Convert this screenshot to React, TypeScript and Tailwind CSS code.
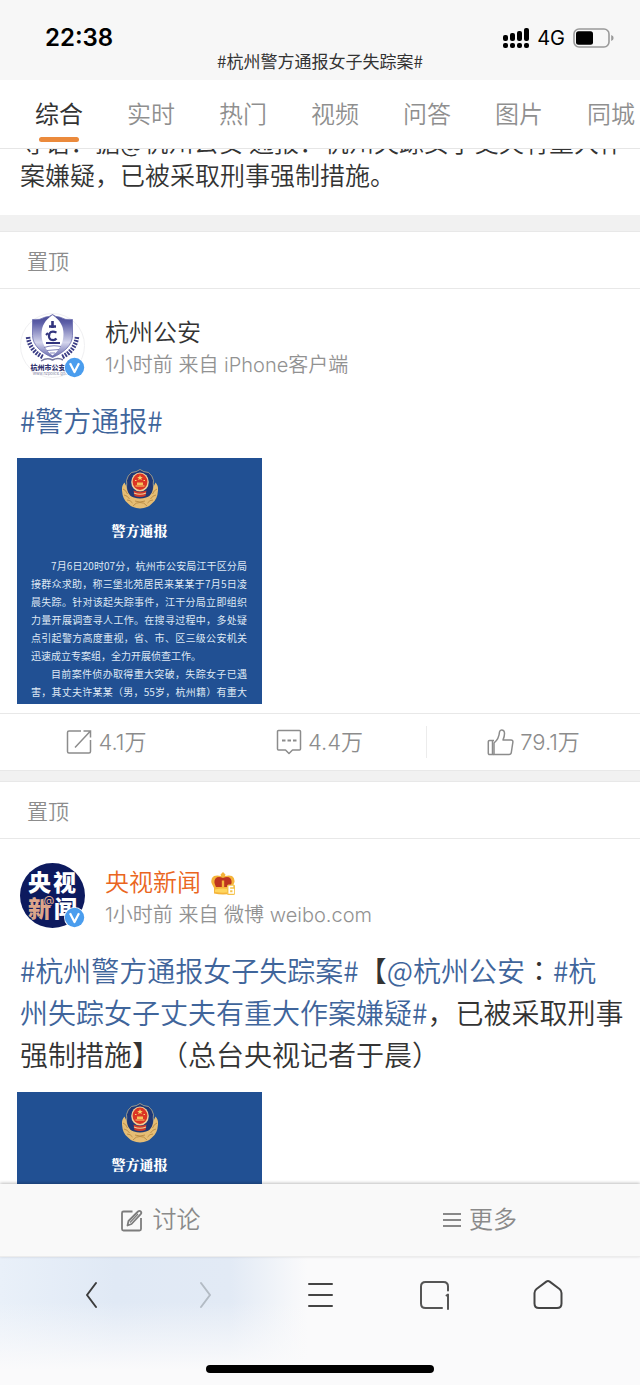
import React from 'react';

const tabs = ['综合', '实时', '热门', '视频', '问答', '图片', '同城'];

const SignalIcon = () => (
  <svg width="27" height="21" viewBox="0 0 27 21" aria-hidden="true">
    <rect x="0" y="7" width="5" height="6" rx="2" />
    <rect x="7" y="5" width="5" height="8" rx="2" />
    <rect x="14" y="3" width="5" height="10" rx="2" />
    <rect x="21" y="0" width="5" height="13" rx="2" />
    <rect x="0" y="15" width="5" height="5" rx="2" />
    <rect x="7" y="15" width="5" height="5" rx="2" />
    <rect x="14" y="15" width="5" height="5" rx="2" />
    <rect x="21" y="15" width="5" height="5" rx="2" />
  </svg>
);

const BatteryIcon = () => (
  <svg width="41" height="20" viewBox="0 0 41 20" aria-hidden="true">
    <rect x="1" y="1" width="35" height="18" rx="5" fill="none" stroke="#9a9a9a" strokeWidth="1.6" />
    <rect x="3" y="3.200" width="17" height="13.600" rx="2.500" />
    <path d="M38.200 7v6c2-.8 2.300-1.800 2.300-3s-.3-2.200-2.300-3z" fill="#9a9a9a" />
  </svg>
);

const VerifiedBadge = () => (
  <svg width="21" height="21" viewBox="0 0 21 21" className="absolute right-0 bottom-0" aria-hidden="true">
    <circle cx="10.500" cy="10.500" r="10.500" fill="#fff" />
    <circle cx="10.500" cy="10.500" r="9.700" fill="#4a9dee" />
    <path d="M6 6.200l4.500 8.800L15 6.200" fill="none" stroke="#fff" strokeWidth="2.200" strokeLinejoin="round" />
  </svg>
);

const PoliceAvatar = () => (
  <svg width="65" height="65" viewBox="0 0 65 65" aria-hidden="true">
    <defs>
      <linearGradient id="shield" x1="0" y1="0" x2="0" y2="1">
        <stop offset="0" stopColor="#43458f" />
        <stop offset="0.2" stopColor="#5d5fa8" />
        <stop offset="0.65" stopColor="#d4d5ec" />
        <stop offset="1" stopColor="#6668ac" />
      </linearGradient>
    </defs>
    <circle cx="32.500" cy="32.500" r="32" fill="#fff" stroke="#f0f0f2" />
    <path d="M12.500 6.500q7 1 13-2.500 4 0 7-2.500 3 2.500 7 2.500 6 3.500 13 2.500v16c0 9-8 17-20 22-12-5-20-13-20-22z" fill="url(#shield)" stroke="#6a6cae" strokeWidth="0.800" />
    <path d="M32.500 2C25 7 21.500 13 21.500 21c0 10 5 17 11 21.500 6-4.500 11-11.500 11-21.500 0-8-3.500-14-11-19z" fill="#fff" />
    <path d="M32.500 8v7M29 13.500h7" stroke="#32347e" strokeWidth="2.600" />
    <path d="M36.500 19.500q-5-2-7 1-1.500 3.500 1 6 4 1.500 6-1" fill="none" stroke="#32347e" strokeWidth="2.200" />
    <path d="M26 30h14M28 20l-2 2" stroke="#32347e" strokeWidth="2" />
    <path d="M24 34.500q8-3 17-1M27 37.500l12-1M30 40h5" fill="none" stroke="#8284bb" strokeWidth="1.100" />
    <path d="M8 24q2 14 15 20M57 24q-2 14-15 20" fill="none" stroke="#3b3d85" strokeWidth="4.500" strokeDasharray="1.800 1.200" />
    <path d="M21 48q6-4 11.500-1 5.500-3 10.500 0" fill="none" stroke="#77799f" strokeWidth="1.500" />
    <text x="28" y="57" textAnchor="middle" fontSize="7" fontWeight="900" fill="#33356f">杭州市公安</text>
    <text x="30" y="62" textAnchor="middle" fontSize="4" fill="#55577f">www.hzpolice.gov</text>
  </svg>
);

const NewsAvatar = () => (
  <svg width="65" height="65" viewBox="0 0 65 65" aria-hidden="true">
    <circle cx="32.500" cy="32.500" r="32.500" fill="#0d1a5e" />
    <text x="8" y="28" fontSize="23" fontWeight="900" fill="#fff">央</text>
    <text x="33" y="28" fontSize="23" fontWeight="900" fill="#fff">视</text>
    <text x="8" y="54" fontSize="23" fontWeight="900" fill="#dda58a">新</text>
    <text x="34" y="54" fontSize="23" fontWeight="900" fill="#fff">闻</text>
    <circle cx="29" cy="37" r="5.500" fill="#0d1a5e" />
    <text x="29" y="40.500" textAnchor="middle" fontSize="11" fontWeight="500" fill="#dda58a">@</text>
  </svg>
);

const CrownIcon = () => (
  <svg width="24" height="23" viewBox="0 0 24 23" aria-hidden="true">
    <path d="M12 0l2.500 2.500-.5 1.500q4-1 7 0 3 2 2.500 6L21 16v5.500q-9 2-18 0V16L.5 11Q-.5 6 3 4q3-1 7 0l-.5-1.500z" fill="#f5b43a" />
    <path d="M12 6q-5-2-7.500.5-2.500 3 .5 8.500h14q3-5.500.5-8.500-2.500-2.500-7.500-.5z" fill="#bd3421" />
    <path d="M10.800 8.500h2.400V15h-2.400z" fill="#f5b43a" />
    <path d="M4 17.500q8-2 16 0v2.500q-8 1.500-16 0z" fill="#ffd65e" />
    <rect x="16" y="12.500" width="8" height="10.500" rx="1.500" fill="#f5c24a" />
    <path d="M22.300 14.500h-4v6.500h4v-3.500h-4" fill="none" stroke="#fff" strokeWidth="1.700" />
  </svg>
);

const PoliceEmblem = () => (
  <svg width="38" height="41" viewBox="0 0 38 41" aria-hidden="true">
    <path d="M19 .5q3.500 2.800 8.500 3 4 3 5 8-.5 3 0 6.500 0 11-6 17h-15q-6-6-6-17 .5-3.500 0-6.500 1-5 5-8 5-.2 8.500-3z" fill="#1f3876" stroke="#cdbb8c" strokeWidth="0.700" />
    <ellipse cx="19" cy="13" rx="8.800" ry="9.600" fill="#f0cf98" />
    <ellipse cx="19" cy="12.800" rx="7.400" ry="8.200" fill="#dc3524" />
    <path d="M19 6l.8 2h2l-1.600 1.200.6 2L19 10l-1.800 1.200.6-2L16.200 8h2z" fill="#f6d36a" />
    <path d="M14 11.500h1.500M22.500 11.500H24M14.500 17h9" stroke="#f6d36a" strokeWidth="1.200" />
    <path d="M16 13.500h6v2.500h-6z" fill="#f6c35a" />
    <path d="M12.500 21.500q6.500 2.500 13 0l-1 5.500q-5.500 2-11 0z" fill="#cf3a2a" />
    <path d="M13 24q6 2.500 12 0" fill="none" stroke="#f0cf98" strokeWidth="1.200" />
    <path d="M3.500 13.500q2 3.500 3 8.500 2 5.500 6.500 6.500 6 2 12 0 4.500-1 6.500-6.500 1-5 3-8.500 3 3 2.500 8-.5 9-6 13-4 4.500-12 5-8-.5-12-5-5.500-4-6-13-.5-5 2.500-8z" fill="#e6bd74" />
    <path d="M2 20q3 1 4.500 5M3 26q3.500.5 5.500 4M6 31q3.500 0 5.500 3M36 20q-3 1-4.500 5M35 26q-3.500.5-5.500 4M32 31q-3.500 0-5.500 3M12 37q3-4 7-3.500 4-.5 7 3.500M14 32q5 2 10 0" fill="none" stroke="#b98a43" strokeWidth="0.900" />
  </svg>
);

const ShareIcon = () => (
  <svg width="26" height="26" viewBox="0 0 26 26" fill="none" stroke="#8c8c8c" strokeWidth="1.500" aria-hidden="true">
    <path d="M15 2H3a1.500 1.500 0 0 0-1.500 1.500v19A1.500 1.500 0 0 0 3 24h20a1.500 1.500 0 0 0 1.500-1.500V11" />
    <path d="M9 18.500L24 2.500M17.500 2h7v6.500" />
  </svg>
);

const CommentIcon = () => (
  <svg width="26" height="26" viewBox="0 0 26 26" fill="none" stroke="#8c8c8c" strokeWidth="1.500" aria-hidden="true">
    <path d="M2.500 1.500h21a1 1 0 0 1 1 1V20a1 1 0 0 1-1 1h-7L13 24.500 9.500 21h-7a1 1 0 0 1-1-1V2.500a1 1 0 0 1 1-1z" strokeLinejoin="round" />
    <path d="M6 11.500h3.500M11.500 11.500H15M17 11.500h3.500" strokeWidth="1.800" />
  </svg>
);

const LikeIcon = () => (
  <svg width="27" height="27" viewBox="0 0 27 27" fill="none" stroke="#8c8c8c" strokeWidth="1.500" strokeLinejoin="round" aria-hidden="true">
    <path d="M7 25.500H2.500a1.200 1.200 0 0 1-1.200-1.200V12.700a1.200 1.200 0 0 1 1.200-1.200H7M5.500 11.500v14" />
    <path d="M7 25.500V14q5-4 5.500-11 .5-2 2-2 3 0 3 3.500 0 3-1.500 6.500h8q2 0 1.900 2l-1.600 10.500q-.3 2-2.300 2z" />
  </svg>
);

const ComposeIcon = () => (
  <svg width="23" height="23" viewBox="0 0 23 23" fill="none" stroke="#7d7d7d" strokeWidth="1.800" aria-hidden="true">
    <path d="M12.500 2.500h-9A1.500 1.500 0 0 0 2 4v16a1.500 1.500 0 0 0 1.500 1.500h16A1.500 1.500 0 0 0 21 20V9" />
    <path d="M7.500 16.500l1-4.500L18 2.500q1.500-1.200 2.700 0t0 2.600L11.500 15z" strokeLinejoin="round" />
    <path d="M10 13.500l8-8.500" strokeWidth="1.200" />
  </svg>
);

const MoreIcon = () => (
  <svg width="18" height="16" viewBox="0 0 18 16" stroke="#888" strokeWidth="1.800" aria-hidden="true">
    <path d="M0 2h18M0 8h18M0 14h18" />
  </svg>
);

const navItems = [
  { label: '后退', color: 'text-[#3c3c3c]', path: 'M21 5l-9 12 9 12' },
  { label: '前进', color: 'text-[#b3bbc4]', path: 'M12 5l9 12-9 12' },
  { label: '菜单', color: 'text-[#444]', path: 'M6 6h23M6 17h23M6 28h23' },
  { label: '窗口', color: 'text-[#555]', path: 'M31 12.500V8.500Q31 4 26.500 4H8.500Q4 4 4 8.500v17Q4 30 8.500 30H25M29.500 17.500l1.500-1V31' },
  { label: '主页', color: 'text-[#444]', path: 'M15.300 3.600Q17 2.500 18.700 3.600L28.500 11q2 1.500 2 4v10.500q0 4.500-4.500 4.500H8q-4.500 0-4.500-4.500V15q0-2.500 2-4z' },
];

const Pinned = () => (
  <h2 className="flex h-[58px] items-center border-y border-[#e8e8e8] px-[27px] pt-1 text-[21px] leading-7 text-[#8c8c8c]">置顶</h2>
);

type HeaderProps = { avatar: React.ReactNode; name: string; nameColor: string; meta: string; badge?: React.ReactNode };

const PostHeader = ({ avatar, name, nameColor, meta, badge }: HeaderProps) => (
  <header className="flex gap-5 px-5 pt-6">
    <div className="relative h-[65px] w-[65px] shrink-0">
      {avatar}
      <VerifiedBadge />
    </div>
    <div className="min-w-0 pt-0.5">
      <h3 className={`flex items-center gap-2.5 text-2xl leading-9 ${nameColor}`}>
        {name}
        {badge}
      </h3>
      <p className="text-xl leading-7 text-[#929292]">{meta}</p>
    </div>
  </header>
);

const Poster = ({ children }: { children?: React.ReactNode }) => (
  <div className="h-[246px] w-[245px] overflow-hidden bg-[#215093] pt-[11px] text-white">
    <div className="flex justify-center">
      <PoliceEmblem />
    </div>
    <h4 className="mt-2.5 text-center font-['Noto_Serif_CJK_SC','Noto_Sans_CJK_SC',serif] text-sm leading-5 font-black">警方通报</h4>
    <div className="mt-[17px] pr-[15px] pl-3.5 text-justify indent-5 font-['Noto_Sans_CJK_SC',sans-serif] text-[10px] leading-[18px] font-normal text-[#dfe8f4]">
      {children}
    </div>
  </div>
);

const Action = ({ icon, count, label }: { icon: React.ReactNode; count: string; label: string }) => (
  <button aria-label={`${label} ${count}`} className="flex h-8 flex-1 items-center justify-center gap-1.5 text-[22px] leading-7 text-[#8c8c8c]">
    {icon}
    <span>{count}</span>
  </button>
);

export default function App() {
  return (
    <div className="flex h-screen flex-col bg-white font-['Inter','Noto_Sans_CJK_SC',sans-serif] font-[350] text-[#333] [text-spacing-trim:space-all]">
      <header className="relative h-20 shrink-0 bg-[#f7f7f7] text-black">
        <div className="flex items-center justify-between pt-6 pr-[26px] pl-[45px]">
          <time className="text-2xl leading-7 font-semibold">22:38</time>
          <div className="flex items-center font-normal">
            <SignalIcon />
            <span className="mr-2 ml-[7px] text-xl leading-7">4G</span>
            <BatteryIcon />
          </div>
        </div>
        <h1 className="text-center font-['Noto_Sans_CJK_SC',sans-serif] text-[17px] leading-[18px] font-normal text-[#333]">#杭州警方通报女子失踪案#</h1>
      </header>

      <nav className="flex h-[69px] shrink-0 gap-11 overflow-hidden border-b border-[#e6e6e6] bg-white pl-[35px]">
        {tabs.map((tab, i) => (
          <button
            key={tab}
            className={
              i === 0
                ? 'flex shrink-0 flex-col items-center pt-[17px] text-2xl leading-9 font-normal text-[#333]'
                : 'flex shrink-0 flex-col items-center pt-[17px] text-2xl leading-9 text-[#8f8f8f]'
            }
          >
            {tab}
            {i === 0 && <span className="mt-1 h-[5px] w-10 rounded-full bg-[#eb8a3c]" />}
          </button>
        ))}
      </nav>

      <main className="min-h-0 flex-1 overflow-hidden bg-[#f1f1f1]">
        <section className="-mt-[24px] bg-white pr-3 pb-6 pl-5 font-['Noto_Sans_CJK_SC',sans-serif] text-[25px] leading-[33px]">
          <p>
            导语：据@杭州公安 通报：杭州失踪女子丈夫有重大作
            <br />
            案嫌疑，已被采取刑事强制措施。
          </p>
        </section>

        <article className="mt-4 bg-white">
          <Pinned />
          <PostHeader avatar={<PoliceAvatar />} name="杭州公安" nameColor="text-[#333]" meta="1小时前 来自 iPhone客户端" />
          <p className="px-5 pt-5 font-['Noto_Sans_CJK_SC',sans-serif] text-[28px] leading-[42px]">
            <a href="#notice" className="text-[#3f659b]">#警方通报#</a>
          </p>
          <div className="px-[17px] pt-[17px] pb-[9px]">
            <Poster>
              <p>7月6日20时07分，杭州市公安局江干区分局接群众求助，称三堡北苑居民来某某于7月5日凌晨失踪。针对该起失踪事件，江干分局立即组织力量开展调查寻人工作。在搜寻过程中，多处疑点引起警方高度重视，省、市、区三级公安机关迅速成立专案组，全力开展侦查工作。</p>
              <p className="[text-align-last:justify]">目前案件侦办取得重大突破，失踪女子已遇害，其丈夫许某某（男，55岁，杭州籍）有重大</p>
            </Poster>
          </div>
          <footer className="flex h-[58px] items-center border-y border-[#e8e8e8]">
            <Action icon={<ShareIcon />} count="4.1万" label="转发" />
            <Action icon={<CommentIcon />} count="4.4万" label="评论" />
            <span className="h-8 w-px bg-[#ececec]" />
            <Action icon={<LikeIcon />} count="79.1万" label="赞" />
          </footer>
        </article>

        <article className="mt-[10px] bg-white">
          <Pinned />
          <PostHeader avatar={<NewsAvatar />} name="央视新闻" nameColor="text-[#ea6520]" meta="1小时前 来自 微博 weibo.com" badge={<CrownIcon />} />
          <p className="pt-5 pr-3 pl-5 font-['Noto_Sans_CJK_SC',sans-serif] text-[28px] leading-[42px] text-[#333]">
            <a href="#case" className="text-[#3f659b]">#杭州警方通报女子失踪案#</a>【<a href="#hzga" className="text-[#3f659b]">@杭州公安</a>
            <span lang="zh-TW" className="font-['Noto_Sans_CJK_TC',sans-serif]">：</span>
            <a href="#suspect" className="text-[#3f659b]">#杭<br />州失踪女子丈夫有重大作案嫌疑#</a>，已被采取刑事
            <br />
            强制措施】（总台央视记者于晨）
          </p>
          <div className="px-[17px] pt-[17px]">
            <Poster />
          </div>
        </article>
      </main>

      <div className="relative flex h-[73px] shrink-0 items-center border-b border-[#ececec] bg-[#f9f9f9] text-2xl leading-9 text-[#8a8a8a] shadow-[0_-1px_3px_rgba(0,0,0,0.25)]">
        <button className="flex flex-1 items-center justify-center gap-2.5">
          <ComposeIcon />
          讨论
        </button>
        <button className="flex flex-1 items-center justify-center gap-2">
          <MoreIcon />
          更多
        </button>
      </div>

      <footer className="shrink-0 bg-[#fafafb] bg-[linear-gradient(to_bottom,transparent_35%,#fafafb_88%),linear-gradient(to_right,#e9f0f9,#e0e9f5_18%,#e2eaf5_36%,#fafafb_48%)] pb-3">
        <nav className="flex px-[35px] pt-[21px]">
          {navItems.map((item) => (
            <button key={item.label} aria-label={item.label} className={`flex flex-1 justify-center ${item.color}`}>
              <svg width="35" height="35" viewBox="0 0 35 35" fill="none" stroke="currentColor" strokeWidth="2" strokeLinecap="round" strokeLinejoin="round">
                <path d={item.path} />
              </svg>
            </button>
          ))}
        </nav>
        <div className="mx-auto mt-[52px] h-2 w-[228px] rounded-full bg-black" />
      </footer>
    </div>
  );
}
